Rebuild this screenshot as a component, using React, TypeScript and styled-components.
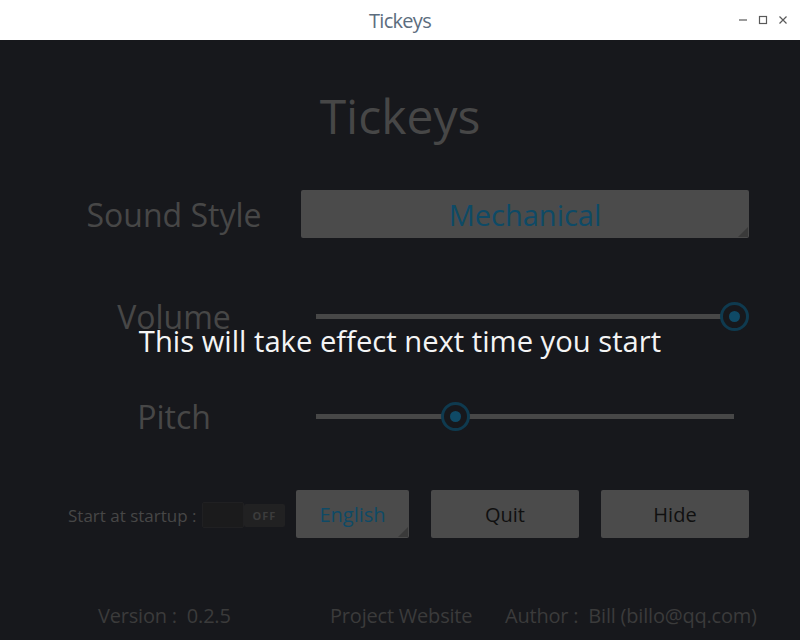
import React from "react";
import styled, { createGlobalStyle } from "styled-components";

const GlobalStyle = createGlobalStyle`
  html, body {
    margin: 0;
    padding: 0;
    background: #17181c;
  }
  body {
    font-family: "Open Sans", "DejaVu Sans", sans-serif;
  }
`;

const Window = styled.div`
  width: 800px;
  height: 640px;
  display: flex;
  flex-direction: column;
  overflow: hidden;
`;

const TitleBar = styled.div`
  height: 40px;
  flex: none;
  background: #ffffff;
  display: flex;
  align-items: center;
  justify-content: center;
  position: relative;
`;

const TitleText = styled.span`
  font-size: 20px;
  letter-spacing: -0.7px;
  color: #5c6d7e;
`;

const Controls = styled.div`
  position: absolute;
  right: 12px;
  top: 15px;
  display: flex;
  gap: 10px;
  align-items: center;
`;

const Main = styled.div`
  flex: 1;
  position: relative;
  background: #17181c;
  display: flex;
  flex-direction: column;
`;

const BigTitle = styled.h1`
  margin: 38px 0 0;
  height: 76px;
  line-height: 76px;
  text-align: center;
  font-weight: 400;
  font-size: 48px;
  color: #474747;
`;

const FieldRow = styled.div<{ $top: number; $height: number }>`
  margin-top: ${(p) => p.$top}px;
  height: ${(p) => p.$height}px;
  display: grid;
  grid-template-columns: 252px 448px;
  column-gap: 1px;
  padding-left: 48px;
  align-items: center;
`;

const Label = styled.div`
  text-align: center;
  font-size: 32px;
  color: #474747;
`;

const Button = styled.div<{ $width: number; $accent?: boolean; $corner?: boolean }>`
  position: relative;
  width: ${(p) => p.$width}px;
  height: 48px;
  background: #4b4b4b;
  border-radius: 2px;
  display: flex;
  align-items: center;
  justify-content: center;
  color: ${(p) => (p.$accent ? "#0e4a66" : "#101010")};
  font-size: 20px;
  box-sizing: border-box;
  &::after {
    content: "";
    display: ${(p) => (p.$corner ? "block" : "none")};
    position: absolute;
    right: 1px;
    bottom: 1px;
    border-style: solid;
    border-width: 0 0 10px 10px;
    border-color: transparent transparent #3a3a3a transparent;
  }
`;

const Dropdown = styled(Button)`
  font-size: 29px;
`;

const SliderBox = styled.div`
  position: relative;
  height: 50px;
  margin: 0 15px;
  display: flex;
  align-items: center;
`;

const Track = styled.div`
  height: 5px;
  width: 100%;
  background: #474747;
`;

const Thumb = styled.div`
  position: absolute;
  top: 50%;
  width: 29px;
  height: 29px;
  margin-left: -14.5px;
  margin-top: -14.5px;
  box-sizing: border-box;
  border-radius: 50%;
  border: 3px solid #0f3a4f;
  background: #17181c;
  display: flex;
  align-items: center;
  justify-content: center;
  &::after {
    content: "";
    width: 11px;
    height: 11px;
    border-radius: 50%;
    background: #0f4a66;
  }
`;

const Toast = styled.div`
  position: absolute;
  left: 0;
  right: 0;
  top: 281px;
  text-align: center;
  font-size: 29.2px;
  color: #f4f4f4;
  pointer-events: none;
`;

const BottomRow = styled.div`
  margin-top: 49px;
  height: 48px;
  padding-left: 68px;
  display: flex;
  align-items: center;
`;

const SmallLabel = styled.span`
  font-size: 17px;
  color: #474747;
  width: 134px;
  white-space: nowrap;
  padding-top: 3px;
`;

const Switch = styled.div`
  display: flex;
  align-items: center;
  margin-right: 11px;
  padding-top: 2px;
`;

const SwitchKnob = styled.div`
  width: 42px;
  height: 26px;
  background: #1b1b1c;
  border: 1px solid #202022;
  border-radius: 2px;
  box-sizing: border-box;
`;

const SwitchLabel = styled.div`
  width: 41px;
  height: 23px;
  background: #212122;
  border-radius: 2px;
  color: #3c3c3c;
  font-size: 11px;
  font-weight: 700;
  letter-spacing: 1px;
  display: flex;
  align-items: center;
  justify-content: center;
`;

const ButtonGroup = styled.div`
  display: flex;
  gap: 22px;
`;

const Footer = styled.div`
  margin-top: 57px;
  height: 40px;
  padding-left: 98px;
  display: grid;
  grid-template-columns: 232px 175px auto;
  align-items: center;
  font-size: 20px;
  letter-spacing: -0.2px;
  color: #3b3b3b;
  white-space: pre;
`;

const WindowIcons = () => (
  <Controls>
    <svg width="10" height="10" viewBox="0 0 10 10">
      <line x1="1" y1="5" x2="9" y2="5" stroke="#5a5a5a" strokeWidth="1.2" />
    </svg>
    <svg width="10" height="10" viewBox="0 0 10 10">
      <rect x="1.5" y="1.5" width="7" height="7" fill="none" stroke="#5a5a5a" strokeWidth="1.2" />
    </svg>
    <svg width="10" height="10" viewBox="0 0 10 10">
      <path d="M1.5 1.5 L8.5 8.5 M8.5 1.5 L1.5 8.5" stroke="#5a5a5a" strokeWidth="1.2" />
    </svg>
  </Controls>
);

const Slider = ({ value }: { value: number }) => (
  <SliderBox>
    <Track />
    <Thumb style={{ left: `${value * 100}%` }} />
  </SliderBox>
);

export default function App() {
  return (
    <>
      <GlobalStyle />
      <Window>
        <TitleBar>
          <TitleText>Tickeys</TitleText>
          <WindowIcons />
        </TitleBar>
        <Main>
          <BigTitle>Tickeys</BigTitle>
          <FieldRow $top={36} $height={48}>
            <Label>Sound Style</Label>
            <Dropdown $width={448} $accent $corner>
              Mechanical
            </Dropdown>
          </FieldRow>
          <FieldRow $top={53} $height={50}>
            <Label>Volume</Label>
            <Slider value={1} />
          </FieldRow>
          <FieldRow $top={50} $height={50}>
            <Label>Pitch</Label>
            <Slider value={0.333} />
          </FieldRow>
          <BottomRow>
            <SmallLabel>Start at startup :</SmallLabel>
            <Switch>
              <SwitchKnob />
              <SwitchLabel>OFF</SwitchLabel>
            </Switch>
            <ButtonGroup>
              <Button $width={113} $accent $corner>
                English
              </Button>
              <Button $width={148}>Quit</Button>
              <Button $width={148}>Hide</Button>
            </ButtonGroup>
          </BottomRow>
          <Footer>
            <span>Version :  0.2.5</span>
            <span>Project Website</span>
            <span>Author :  Bill (billo@qq.com)</span>
          </Footer>
          <Toast>This will take effect next time you start</Toast>
        </Main>
      </Window>
    </>
  );
}
